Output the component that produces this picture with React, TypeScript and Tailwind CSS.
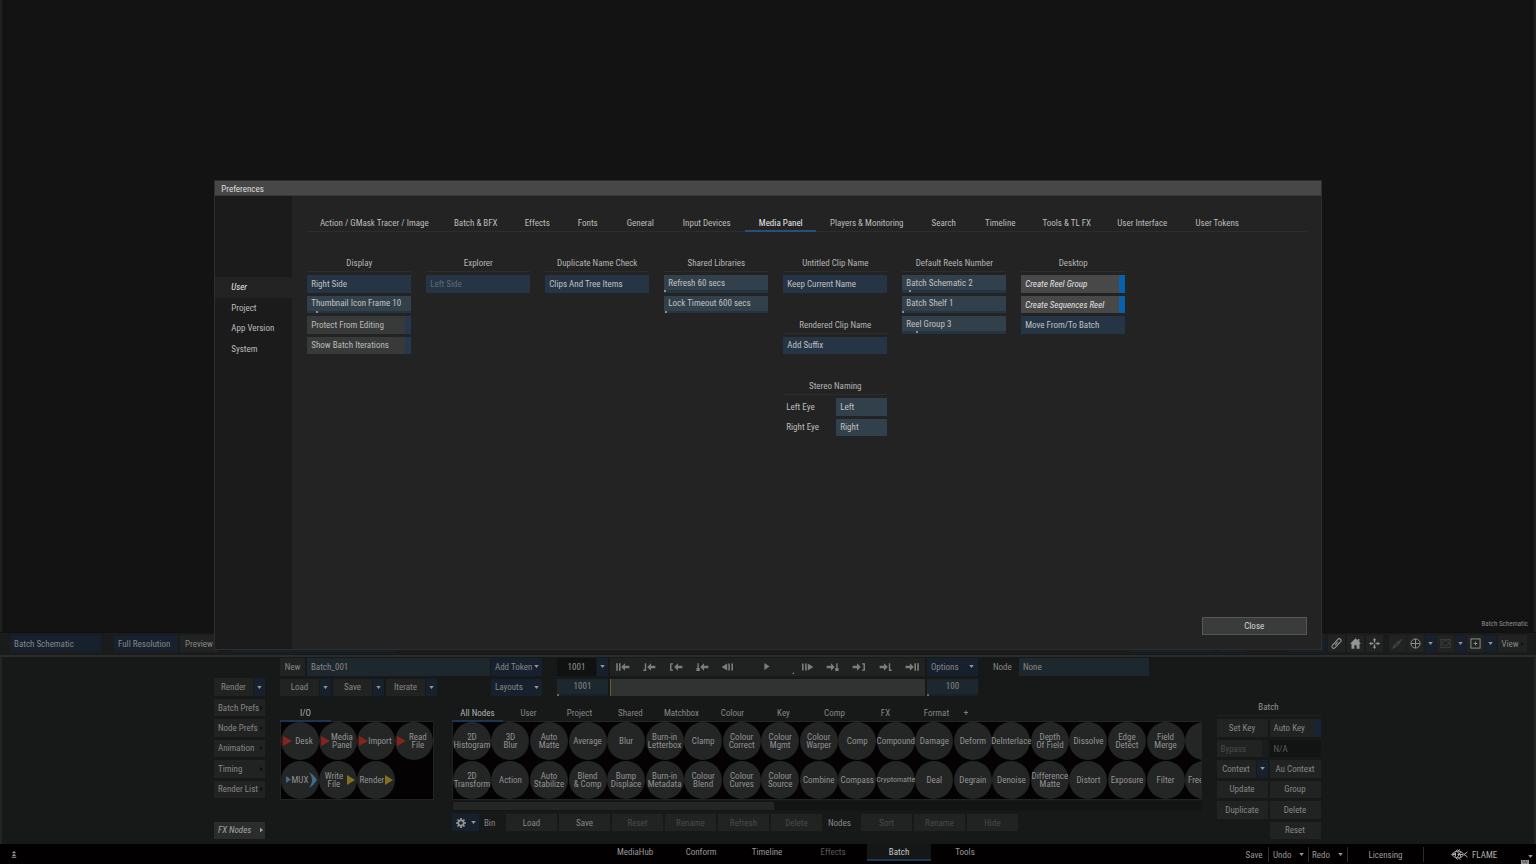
import { ReactNode } from "react";
import clsx from "clsx";

const FONT = "font-['Roboto_Condensed','Roboto','Liberation_Sans',sans-serif]";
const BTN = "flex min-w-0 items-center bg-[#212222] whitespace-nowrap";
const BLUE = "bg-[#16212d]";
const FIELD = "bg-[#1d282e]";

function Caret({ className }: { className?: string }) {
  return (
    <svg viewBox="0 0 6 4" className={clsx("h-[3px] w-[5px] shrink-0", className)} aria-hidden="true">
      <path d="M0 0H6L3 4Z" fill="currentColor" />
    </svg>
  );
}

function RightCaret({ className }: { className?: string }) {
  return (
    <svg viewBox="0 0 4 6" className={clsx("h-[6px] w-[3px] shrink-0", className)} aria-hidden="true">
      <path d="M0 0V6L4 3Z" fill="currentColor" />
    </svg>
  );
}

function Btn({ children, className, disabled }: { children: ReactNode; className?: string; disabled?: boolean }) {
  return (
    <button
      type="button"
      disabled={disabled}
      className={clsx(BTN, "justify-center", disabled ? "text-[#4a4a4a]" : "text-[#868686]", className)}
    >
      {children}
    </button>
  );
}

function SplitBtn({ label }: { label: string }) {
  return (
    <div className="flex w-[51px] items-stretch gap-px">
      <Btn className="flex-1">{label}</Btn>
      <button type="button" aria-label={`${label} options`} className={clsx("flex w-[11px] items-center justify-center text-[#959595]", BLUE)}>
        <Caret />
      </button>
    </div>
  );
}

/* ---------- Preferences dialog ---------- */

const prefTabs: [string, string][] = [
  ["Action / GMask Tracer / Image", "w-[132px]"],
  ["Batch & BFX", "w-[71px]"],
  ["Effects", "w-[52px]"],
  ["Fonts", "w-[49px]"],
  ["General", "w-[56px]"],
  ["Input Devices", "w-[77px]"],
  ["Media Panel", "w-[71px]"],
  ["Players & Monitoring", "w-[101px]"],
  ["Search", "w-[53px]"],
  ["Timeline", "w-[60px]"],
  ["Tools & TL FX", "w-[73px]"],
  ["User Interface", "w-[78px]"],
  ["User Tokens", "w-[72px]"],
];

function Heading({ children }: { children: ReactNode }) {
  return (
    <h3 className="flex items-center justify-center border-b border-[#2b2d2d] text-[#b4b4b4]">{children}</h3>
  );
}

function Pick({ label, value, disabled }: { label: string; value: string; disabled?: boolean }) {
  return (
    <select
      aria-label={label}
      disabled={disabled}
      className={clsx("w-full min-w-0 appearance-none bg-[#253546] px-[4px] opacity-100", disabled ? "text-[#626a72]" : "text-[#c0c0c0]")}
    >
      <option>{value}</option>
    </select>
  );
}

function Stepper({ value, tick }: { value: string; tick: string }) {
  return (
    <div className="flex min-h-0 flex-col bg-[#31404a]">
      <input aria-label={value} defaultValue={value} className="h-[15px] w-full bg-transparent px-[4px] text-[#c0c0c0]" />
      <div className="flex-1 bg-[#253441]">
        <div className={clsx("h-[2px] w-[2px] bg-[#8a8f93]", tick)} />
      </div>
    </div>
  );
}

function Toggle({ label, on }: { label: string; on?: boolean }) {
  return (
    <label className={clsx("flex items-stretch", on ? "bg-[#484848] text-[#e2e2e2] italic" : "bg-[#383939] text-[#bababa]")}>
      <input type="checkbox" defaultChecked={on} className="sr-only" />
      <span className="flex flex-1 items-center px-[4px]">{label}</span>
      <span className={clsx("w-[6px]", on ? "bg-[#0660aa]" : "bg-[#253850]")} />
    </label>
  );
}

function Column({ children }: { children: ReactNode }) {
  return <section className="grid grid-rows-9 gap-y-[3px]">{children}</section>;
}

function Preferences() {
  return (
    <div role="dialog" aria-label="Preferences" className="w-[72.1%] border border-[#2e2e2e] bg-[#232323] text-[#bcbcbc]">
      <h2 className="flex h-[15px] items-center border-b border-[#393939] bg-[#474747] pt-px pl-[6px] text-[#dcdcdc]">Preferences</h2>
      <div className="flex min-h-[453px]">
        <nav className="w-[77px] shrink-0 bg-[#1b1b1b] pt-[81px]">
          <ul className="grid h-[82px] grid-rows-4">
            {["User", "Project", "App Version", "System"].map((t) => (
              <li key={t} className={clsx("flex", t === "User" && "bg-[#232323] text-[#e8e8e8] italic")}>
                <button type="button" className="w-full pl-[16px] text-left">{t}</button>
              </li>
            ))}
          </ul>
        </nav>
        <div className="flex min-w-0 flex-1 flex-col pt-[18px] pr-[14px] pb-[14px] pl-[15px]">
          <div role="tablist" className="flex border-b border-[#2b2e2e] pl-px">
            {prefTabs.map(([t, w]) => (
              <button
                key={t}
                type="button"
                role="tab"
                className={clsx(
                  "-mb-px h-[18px] border-b-2 pt-px whitespace-nowrap",
                  w,
                  t === "Media Panel" ? "border-b-[#23507f] text-[#e8e8e8]" : "border-b-transparent",
                )}
              >
                {t}
              </button>
            ))}
          </div>
          <div className="mt-[23px] grid h-[181px] grid-cols-[repeat(7,104px)] gap-x-[15px]">
            <Column>
              <Heading>Display</Heading>
              <Pick label="Media panel side" value="Right Side" />
              <Stepper value="Thumbnail Icon Frame 10" tick="ml-[9px]" />
              <Toggle label="Protect From Editing" />
              <Toggle label="Show Batch Iterations" />
            </Column>
            <Column>
              <Heading>Explorer</Heading>
              <Pick label="Explorer side" value="Left Side" disabled />
            </Column>
            <Column>
              <Heading>Duplicate Name Check</Heading>
              <Pick label="Duplicate name check" value="Clips And Tree Items" />
            </Column>
            <Column>
              <Heading>Shared Libraries</Heading>
              <Stepper value="Refresh 60 secs" tick="ml-0" />
              <Stepper value="Lock Timeout 600 secs" tick="ml-px" />
            </Column>
            <Column>
              <Heading>Untitled Clip Name</Heading>
              <Pick label="Untitled clip name" value="Keep Current Name" />
              <span />
              <Heading>Rendered Clip Name</Heading>
              <Pick label="Rendered clip name" value="Add Suffix" />
              <span />
              <Heading>Stereo Naming</Heading>
              {["Left", "Right"].map((s) => (
                <label key={s} className="flex items-stretch">
                  <span className="flex flex-1 items-center pl-[3px]">{s} Eye</span>
                  <input defaultValue={s} className="w-[51px] bg-[#31404a] px-[4px] text-[#c0c0c0]" />
                </label>
              ))}
            </Column>
            <Column>
              <Heading>Default Reels Number</Heading>
              <Stepper value="Batch Schematic 2" tick="ml-[7px]" />
              <Stepper value="Batch Shelf 1" tick="ml-0" />
              <Stepper value="Reel Group 3" tick="ml-[14px]" />
            </Column>
            <Column>
              <Heading>Desktop</Heading>
              <Toggle label="Create Reel Group" on />
              <Toggle label="Create Sequences Reel" on />
              <Pick label="Move mode" value="Move From/To Batch" />
            </Column>
          </div>
          <button type="button" className="mt-auto h-[18px] w-[105px] self-end border border-[#565858] bg-[#3a3b3b] text-[#d4d4d4]">
            Close
          </button>
        </div>
      </div>
    </div>
  );
}

/* ---------- Viewer toolbar ---------- */

function ToolIcon({ label, children, dim }: { label: string; children: ReactNode; dim?: boolean }) {
  return (
    <button type="button" aria-label={label} className={clsx("flex w-[17px] items-center justify-center bg-[#212222]", dim ? "text-[#404040]" : "text-[#949494]")}>
      <svg viewBox="0 0 12 12" className="size-[11px]" fill="none" stroke="currentColor" strokeWidth="1" aria-hidden="true">
        {children}
      </svg>
    </button>
  );
}

function ToolDrop({ label }: { label: string }) {
  return (
    <button type="button" aria-label={label} className={clsx("flex w-[11px] items-center justify-center text-[#959595]", BLUE)}>
      <Caret />
    </button>
  );
}

function Toolbar() {
  return (
    <div className="flex h-[25px] items-stretch border-t border-b-2 border-t-[#111] border-b-[#2a2b2b] bg-[#1a1b1b] pt-[2px] pr-[9px] pb-[3px] pl-[11px]">
      <button type="button" className={clsx("flex w-[90px] items-center pl-[3px] text-[#868686]", BLUE)}>Batch Schematic</button>
      <button type="button" className={clsx("ml-[13px] flex w-[64px] items-center pl-[4px] whitespace-nowrap text-[#868686]", BLUE)}>Full Resolution</button>
      <Btn className="ml-[2px] w-[38px]">Preview</Btn>
      <span className={clsx("ml-[14px] w-[62px]", BLUE)} />
      <span className={clsx("ml-[3px] w-[98px]", BLUE)} />
      <span className="flex-1" />
      <span className={clsx("mr-[6px] w-[84px]", BLUE)} />
      <span className={clsx("mr-[42px] w-[26px]", BLUE)} />
      <span className={clsx("flex w-[37px] items-center justify-end pr-[3px] text-[#959595]", BLUE)}>
        <Caret />
      </span>
      <div className="ml-[3px] flex gap-[2px]">
        <ToolIcon label="Link">
          <g transform="rotate(-48 6 6)">
            <rect x="-.4" y="4" width="12.8" height="4" rx="2" strokeWidth="1.2" />
            <path d="M3.6 6H8.4" strokeWidth="1.2" />
          </g>
        </ToolIcon>
        <ToolIcon label="Home">
          <path d="M6 .4 0 6.2H1.6V11.6H4.8V7.8H7.2V11.6H10.4V6.2H12L10.2 4.4V1H8.4V2.7Z" fill="currentColor" stroke="none" />
        </ToolIcon>
        <ToolIcon label="Move">
          <path d="M6 0 7.9 2.4H6.7V4.8H5.3V2.4H4.1ZM6 12 7.9 9.6H6.7V7.2H5.3V9.6H4.1ZM0 6 2.4 4.1V5.3H4.8V6.7H2.4V7.9ZM12 6 9.6 4.1V5.3H7.2V6.7H9.6V7.9Z" fill="currentColor" stroke="none" />
        </ToolIcon>
      </div>
      <div className="ml-[6px] flex gap-px">
        <ToolIcon label="Pick colour" dim>
          <path d="M1.2 10.8 2 8.6 6.6 4 8 5.4 3.4 10ZM6 3.2 8.8 6M7.8 4.2 10.4 1.6" strokeWidth="1.4" />
        </ToolIcon>
        <ToolIcon label="Reticle">
          <circle cx="6" cy="6" r="5" />
          <path d="M6 1V11M1 6H11" />
        </ToolIcon>
        <ToolDrop label="Reticle options" />
        <ToolIcon label="Safe area" dim>
          <rect x="1" y="1.5" width="10" height="9" />
          <rect x="3" y="3" width="6" height="5" rx="1" />
        </ToolIcon>
        <ToolDrop label="Safe area options" />
        <ToolIcon label="Add view">
          <rect x="1" y="1" width="10" height="10" />
          <path d="M6 4V8M4 6H8" />
        </ToolIcon>
        <ToolDrop label="Add view options" />
      </div>
      <Btn className="ml-[2px] w-[29px] gap-[2px]">
        View <RightCaret className="text-[#111]" />
      </Btn>
    </div>
  );
}

/* ---------- Batch panel ---------- */

type Glyph = [string, string];
const BACK_ARROW = "M5.2 4 9 .2V2.7H13.4V5.3H9V7.8Z";
const FWD_ARROW = "M8.8 4 5 .2V2.7H.6V5.3H5V7.8Z";
const left: Glyph[] = [
  ["First frame", `M.2 .3H1.8V7.7H.2ZM3 .3H4.6V7.7H3Z${BACK_ARROW}`],
  ["Previous marker", `M2.8 .3H4.2V8H1.2V6.4H2.8Z${BACK_ARROW}`],
  ["Mark in", `M1 .2H4V1.5H2.5V6.5H4V7.8H1Z${BACK_ARROW}`],
  ["Previous key", `M2.4 .3H3.8V5H4.8V8H1.4V5H2.4Z${BACK_ARROW}`],
  ["Step back", "M.6 4 6.2 .4V7.6ZM7.3 .4H8.9V7.6H7.3ZM10.4 .4H12V7.6H10.4Z"],
];
const right: Glyph[] = [
  ["Step forward", "M13.4 4 7.8 .4V7.6ZM5.1 .4H6.7V7.6H5.1ZM2 .4H3.6V7.6H2Z"],
  ["Next key", `M10.2 .3H11.6V5H12.6V8H9.2V5H10.2Z${FWD_ARROW}`],
  ["Mark out", `M13 .2H10V1.5H11.5V6.5H10V7.8H13Z${FWD_ARROW}`],
  ["Next marker", `M11.2 .3H9.8V8H12.8V6.4H11.2Z${FWD_ARROW}`],
  ["Last frame", `M13.8 .3H12.2V7.7H13.8ZM11 .3H9.4V7.7H11Z${FWD_ARROW}`],
];

function Transport({ glyph: [label, d] }: { glyph: Glyph }) {
  return (
    <button type="button" aria-label={label} className="flex flex-1 items-center justify-center">
      <svg viewBox="0 0 14 8" className="h-[8px] w-[14px]" aria-hidden="true">
        <path d={d} fill="currentColor" />
      </svg>
    </button>
  );
}

function FrameField({ value, label }: { value: string; label: string }) {
  return (
    <div className={clsx("flex w-[51px] flex-col", FIELD)}>
      <input aria-label={label} defaultValue={value} className="h-[15px] w-full bg-transparent text-center text-[#868686]" />
      <div className="flex-1 bg-[#16212b]">
        <div className="h-[2px] w-[2px] bg-[#666]" />
      </div>
    </div>
  );
}

const nodes: [string, string][] = [
  ["2D\nHistogram", "2D\nTransform"],
  ["3D\nBlur", "Action"],
  ["Auto\nMatte", "Auto\nStabilize"],
  ["Average", "Blend\n& Comp"],
  ["Blur", "Bump\nDisplace"],
  ["Burn-in\nLetterbox", "Burn-in\nMetadata"],
  ["Clamp", "Colour\nBlend"],
  ["Colour\nCorrect", "Colour\nCurves"],
  ["Colour\nMgmt", "Colour\nSource"],
  ["Colour\nWarper", "Combine"],
  ["Comp", "Compass"],
  ["Compound", "Cryptomatte"],
  ["Damage", "Deal"],
  ["Deform", "Degrain"],
  ["DeInterlace", "Denoise"],
  ["Depth\nOf Field", "Difference\nMatte"],
  ["Dissolve", "Distort"],
  ["Edge\nDetect", "Exposure"],
  ["Field\nMerge", "Filter"],
  ["", "Freeform"],
];

function Node({ text }: { text: string }) {
  return (
    <button
      type="button"
      aria-label={text || "Film"}
      className={clsx(
        "flex size-[38px] items-center justify-center rounded-full bg-[#242525] text-center leading-[8px] whitespace-pre text-[#929292]",
        text === "Cryptomatte" && "text-[8px]",
      )}
    >
      {text}
    </button>
  );
}

function Tri({ className }: { className: string }) {
  return (
    <svg viewBox="0 0 8 8" preserveAspectRatio="none" className={clsx("shrink-0", className)} aria-hidden="true">
      <path d="M0 0 8 4 0 8Z" fill="currentColor" />
    </svg>
  );
}

function IoNode({ text, kind }: { text: string; kind: "in" | "out" | "mux" }) {
  return (
    <button
      type="button"
      className={clsx(
        "flex size-[38px] items-center rounded-full bg-[#242525] text-center leading-[8px] whitespace-pre text-[#929292]",
        kind === "mux" && "pr-[2px] pl-[5px]",
        kind === "in" && "pr-[3px] pl-[2px]",
        kind === "out" && "pr-[2px] pl-[2px]",
      )}
    >
      {kind === "in" && <Tri className="h-[10px] w-[9px] text-[#8a221c]" />}
      {kind === "mux" && <Tri className="h-[7px] w-[5px] text-[#42698c]" />}
      <span className="flex flex-1 justify-center">{text}</span>
      {kind === "out" && <Tri className="h-[10px] w-[8px] text-[#80701f]" />}
      {kind === "mux" && (
        <svg viewBox="0 0 8 16" className="h-[16px] w-[8px] shrink-0 text-[#42698c]" aria-hidden="true">
          <path d="M0 0Q5 3 8 8 5 13 0 16 3 11 3 8 3 5 0 0Z" fill="currentColor" />
        </svg>
      )}
    </button>
  );
}

function BatchPanel() {
  return (
    <main className="flex items-start gap-[15px] border-x-2 border-[#222323] bg-[#171918] pt-px pr-[13.9%] pb-[5px] pl-[13.8%]">
      <div className="grid h-[181px] w-[51px] shrink-0 grid-rows-9 gap-y-[3px]">
        <span />
        <SplitBtn label="Render" />
        {["Batch Prefs", "Node Prefs", "Animation", "Timing", "Render List"].map((t) => (
          <button key={t} type="button" className={clsx(BTN, "justify-between pr-[2px] pl-[4px] text-[#868686]")}>
            {t} <RightCaret className="text-[#0f1010]" />
          </button>
        ))}
        <span />
        <button type="button" className={clsx(BTN, "justify-between bg-[#2b2c2c]! pr-[2px] pl-[4px] text-[#a4a4a4] italic")}>
          FX Nodes <RightCaret />
        </button>
      </div>

      <div className="min-w-0 flex-1">
        <div className="grid h-[38px] grid-rows-2 gap-y-[3px]">
          <div className="flex items-stretch">
            <Btn className="w-[25px]">New</Btn>
            <input aria-label="Batch name" defaultValue="Batch_001" className={clsx("ml-[2px] w-[183px] px-[4px] text-[#868686]", FIELD)} />
            <button type="button" className={clsx("ml-px flex w-[51px] items-center justify-between pr-[3px] pl-[4px] whitespace-nowrap text-[#868686]", BLUE)}>
              Add Token <Caret className="text-[#959595]" />
            </button>
            <input aria-label="Current frame" defaultValue="1001" className="ml-[15px] w-[39px] bg-[#101111] text-center text-[#929292]" />
            <button type="button" aria-label="Frame options" className={clsx("ml-px flex w-[11px] items-center justify-center text-[#959595]", BLUE)}>
              <Caret />
            </button>
            <div className="ml-[2px] flex w-[315px] bg-[#202121] text-[#7c7c7c]">
              {left.map((g) => <Transport key={g[0]} glyph={g} />)}
              <button type="button" aria-label="Play" className="flex flex-2 items-center justify-center">
                <svg viewBox="0 0 6 8" className="h-[7px] w-[6px]" aria-hidden="true"><path d="M0 0V8L6 4Z" fill="currentColor" /></svg>
              </button>
              <svg viewBox="0 0 2 2" className="-ml-[2px] mb-[2px] size-[2px] self-end" aria-hidden="true"><path d="M2 0V2H0Z" fill="currentColor" /></svg>
              {right.map((g) => <Transport key={g[0]} glyph={g} />)}
            </div>
            <button type="button" className={clsx("ml-[2px] flex w-[51px] items-center justify-between pr-[4px] pl-[4px] text-[#868686]", BLUE)}>
              Options <Caret className="text-[#959595]" />
            </button>
            <label className="ml-[15px] flex flex-1 items-stretch text-[#868686]">
              <span className="flex w-[26px] items-center">Node</span>
              <input defaultValue="None" className={clsx("w-[130px] px-[4px]", FIELD)} />
            </label>
          </div>
          <div className="flex items-stretch">
            <div className="flex gap-[2px]">
              <SplitBtn label="Load" />
              <SplitBtn label="Save" />
              <SplitBtn label="Iterate" />
            </div>
            <button type="button" className={clsx("ml-[54px] flex w-[51px] items-center justify-between pr-[3px] pl-[4px] text-[#868686]", BLUE)}>
              Layouts <Caret className="text-[#959595]" />
            </button>
            <div className="ml-[15px] flex gap-[2px]">
              <FrameField value="1001" label="Start frame" />
              <div className="w-[315px] border-l border-[#6a5a24] bg-[#313333]" />
              <FrameField value="100" label="Duration" />
            </div>
          </div>
        </div>

        <div className="mt-[8px] flex items-start gap-[18px]">
          <section className="w-[154px] shrink-0">
            <div className="flex border-b border-[#232626]">
              <button type="button" className="-mb-px h-[18px] w-[51px] border-b-2 border-b-[#1b3655] pt-px text-[#b0b0b0]">I/O</button>
            </div>
            <div className="grid h-[78px] grid-cols-4 grid-rows-2 justify-items-center border-x border-b border-[#222424] bg-[#040203]">
              <IoNode kind="in" text="Desk" />
              <IoNode kind="in" text={"Media\nPanel"} />
              <IoNode kind="in" text="Import" />
              <IoNode kind="in" text={"Read\nFile"} />
              <IoNode kind="mux" text="MUX" />
              <IoNode kind="out" text={"Write\nFile"} />
              <IoNode kind="out" text="Render" />
            </div>
          </section>
          <section className="min-w-0 flex-1">
            <div className="flex border-b border-[#232626] text-[#868686]">
              {["All Nodes", "User", "Project", "Shared", "Matchbox", "Colour", "Key", "Comp", "FX", "Format"].map((t) => (
                <button
                  key={t}
                  type="button"
                  className={clsx("-mb-px h-[18px] w-[51px] border-b-2 pt-px", t === "All Nodes" ? "border-b-[#1b3655] text-[#b0b0b0]" : "border-b-transparent")}
                >
                  {t}
                </button>
              ))}
              <button type="button" className="w-[8px]">+</button>
            </div>
            <div className="grid h-[78px] auto-cols-[calc(100%/19.4)] grid-flow-col grid-rows-2 overflow-hidden border-x border-b border-[#222424] bg-[#040203]">
              {nodes.flatMap(([a, b]) => [<Node key={a + b + "a"} text={a} />, <Node key={a + b + "b"} text={b} />])}
            </div>
            <div className="mt-px h-[10px] bg-[#131414] p-px">
              <div className="h-full w-[43%] bg-[#242525]" />
            </div>
            <div className="mt-[3px] flex h-[17px] items-stretch text-[#868686]">
              <button type="button" aria-label="Bin settings" className={clsx("flex w-[27px] items-center justify-between pr-[3px] pl-[4px] text-[#959595]", BLUE)}>
                <svg viewBox="0 0 12 12" className="size-[10px]" aria-hidden="true">
                  <circle cx="6" cy="6" r="3.2" fill="none" stroke="currentColor" strokeWidth="2" />
                  <path d="M6 0V2.4M6 9.6V12M0 6H2.4M9.6 6H12M1.8 1.8 3.4 3.4M8.6 8.6 10.2 10.2M1.8 10.2 3.4 8.6M8.6 3.4 10.2 1.8" stroke="currentColor" strokeWidth="2" />
                </svg>
                <Caret />
              </button>
              <span className="flex w-[27px] items-center pl-[5px]">Bin</span>
              <div className="flex gap-[2px]">
                {["Load", "Save", "Reset", "Rename", "Refresh", "Delete"].map((t, i) => (
                  <Btn key={t} disabled={i > 1} className="w-[51px]">{t}</Btn>
                ))}
              </div>
              <span className="flex w-[39px] items-center pl-[6px]">Nodes</span>
              <div className="flex gap-[2px]">
                {["Sort", "Rename", "Hide"].map((t) => (
                  <Btn key={t} disabled className="w-[51px]">{t}</Btn>
                ))}
              </div>
            </div>
          </section>
        </div>
      </div>

      <section className="mt-[41px] grid h-[140px] w-[104px] shrink-0 grid-cols-2 grid-rows-7 gap-x-[2px] gap-y-[3px]">
        <h3 className="col-span-2 flex items-center justify-center border-b border-[#1f2121] text-[#929292]">Batch</h3>
        <Btn>Set Key</Btn>
        <label className={clsx(BTN, "items-stretch! text-[#868686]")}>
          <input type="checkbox" className="sr-only" />
          <span className="flex flex-1 items-center pl-[4px]">Auto Key</span>
          <span className="w-[6px] bg-[#16243a]" />
        </label>
        <label className={clsx(BTN, "items-stretch! text-[#4a4a4a]")}>
          <input type="checkbox" disabled className="sr-only" />
          <span className="flex flex-1 items-center pl-[4px]">Bypass</span>
          <span className="w-[6px] bg-[#1b1c1c]" />
        </label>
        <span className="flex items-center bg-[#121313] pl-[4px] text-[#5c5c5c]">N/A</span>
        <SplitBtn label="Context" />
        <Btn>Au Context</Btn>
        <Btn>Update</Btn>
        <Btn>Group</Btn>
        <Btn>Duplicate</Btn>
        <Btn>Delete</Btn>
        <span />
        <Btn>Reset</Btn>
      </section>
    </main>
  );
}

/* ---------- Bottom bar ---------- */

function Sep() {
  return <span className="my-[2px] w-px bg-[#2a2c2d]" />;
}

function Footer() {
  return (
    <footer className="flex h-[20px] items-start bg-[#020001] pl-[11px] text-[#989898]">
      <button type="button" aria-label="Expand panel" className="flex h-[20px] w-[8px] items-center">
        <svg viewBox="0 0 6 8" className="h-[7px] w-[6px]" aria-hidden="true">
          <path d="M3 0 5.4 2.6H.6ZM3 3 5.4 5.6H.6ZM.4 6.6H5.6V7.6H.4Z" fill="currentColor" />
        </svg>
      </button>
      <nav className="ml-[38.3%] flex gap-[2px]">
        {["MediaHub", "Conform", "Timeline", "Effects", "Batch", "Tools"].map((t) => (
          <a
            key={t}
            href={`#${t.toLowerCase()}`}
            className={clsx(
              "flex h-[17px] w-[64px] items-center justify-center border-b-2 pt-px",
              t === "Batch" ? "border-[#153a55] bg-[#151717] text-[#c8c8c8]" : "border-transparent",
              t === "Effects" && "text-[#5a5a5a]",
            )}
          >
            {t}
          </a>
        ))}
      </nav>
      <div className="ml-auto flex h-[20px] items-stretch pt-px">
        <button type="button" className="w-[28px]">Save</button>
        <Sep />
        <button type="button" className="flex w-[39px] items-center justify-between pr-[4px] pl-[4px]">Undo <Caret /></button>
        <Sep />
        <button type="button" className="flex w-[38px] items-center justify-between pr-[4px] pl-[3px]">Redo <Caret /></button>
        <Sep />
        <button type="button" className="w-[75px]">Licensing</button>
        <Sep />
        <span className="flex w-[88px] items-center gap-[4px] pl-[27px] text-[#b0b0b0]">
          <svg viewBox="0 0 34 20" className="h-[11px] w-[17px]" fill="none" stroke="currentColor" strokeWidth="2" aria-hidden="true">
            <path d="M1 10Q8 2 16 3 22 4 26 10L33 5M26 10 33 15M26 10Q22 16 16 17 8 18 1 10M10 4 13 0M14 3 18 0M10 16 13 20M15 17 19 20M9 6V14M13 5 17 9 13 15M19 5 17 9 20 15M3 10H8M13 10H24" />
            <circle cx="6" cy="9" r="1" fill="currentColor" />
          </svg>
          FLAME
        </span>
        <span className="flex w-[24px] flex-col items-end justify-end gap-[2px] pr-[3px]">
          <Caret />
          <svg viewBox="0 0 8 4" className="mr-[4px] h-[4px] w-[8px]" aria-hidden="true">
            <path d="M0 0H8V4H0Z" fill="currentColor" />
            <path d="M1 1.2H7M2 2.8H6" stroke="#020001" strokeWidth=".6" strokeDasharray="1 .5" />
          </svg>
        </span>
      </div>
    </footer>
  );
}

export default function App() {
  return (
    <div className={clsx("relative flex min-h-screen flex-col bg-[#131313] text-[9px] leading-[12px] font-normal", FONT)}>
      <div className="flex flex-1 items-end justify-end border-x-2 border-[#1f2020] pr-[6px] pb-[2px] text-[7px] text-[#8a8a8a]">
        Batch Schematic
      </div>
      <Toolbar />
      <BatchPanel />
      <Footer />
      <div className="absolute inset-0 flex items-center justify-center pb-[34px]">
        <Preferences />
      </div>
    </div>
  );
}
